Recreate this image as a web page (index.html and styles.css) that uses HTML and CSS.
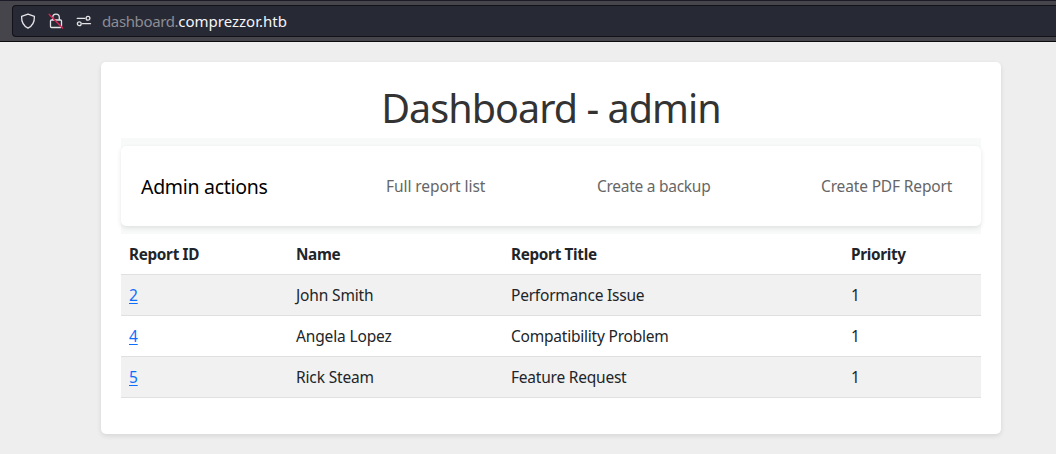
FILE: index.html
```html
<!DOCTYPE html>
<html lang="en">
<head>
<meta charset="utf-8">
<title>Dashboard - admin</title>
<link rel="stylesheet" href="styles.css">
</head>
<body>
<header class="toolbar">
  <div class="urlbar">
    <svg class="icon" viewBox="0 0 16 16"><path d="M8 1.100 14.400 3.400C14.600 9 12.300 12.900 8 15.100 3.700 12.900 1.400 9 1.600 3.400Z"/></svg>
    <svg class="icon" viewBox="0 0 16 16"><path d="M4.700 7V4.400a3.300 3.300 0 0 1 6.600 0V7M3.500 7h9a1 1 0 0 1 1 1v5.500a1 1 0 0 1-1 1h-9a1 1 0 0 1-1-1V8a1 1 0 0 1 1-1Z"/><path class="slash" d="M1.300 1.400 14.500 15"/></svg>
    <svg class="icon" viewBox="0 0 16 16"><path d="M1.200 5.300h7.700M6.400 10.700h8.100"/><circle cx="12" cy="5.300" r="1.900"/><circle cx="3.300" cy="10.700" r="1.900"/></svg>
    <span class="address"><span class="subdomain">dashboard.</span><span class="domain">comprezzor.htb</span></span>
  </div>
</header>
<main class="card">
  <h1 class="title">Dashboard - admin</h1>
  <nav class="navbar">
    <div class="actions">
      <span class="brand">Admin actions</span>
      <a class="action report-list">Full report list</a>
      <a class="action backup">Create a backup</a>
      <a class="action pdf">Create PDF Report</a>
    </div>
  </nav>
  <table class="reports">
    <colgroup><col class="col-id"><col class="col-name"><col class="col-title"><col class="col-priority"></colgroup>
    <thead><tr><th>Report ID</th><th>Name</th><th>Report Title</th><th>Priority</th></tr></thead>
    <tbody>
      <tr><td><a class="link" href="#">2</a></td><td>John Smith</td><td class="report-title">Performance Issue</td><td>1</td></tr>
      <tr><td><a class="link" href="#">4</a></td><td>Angela Lopez</td><td class="report-title">Compatibility Problem</td><td>1</td></tr>
      <tr><td><a class="link" href="#">5</a></td><td>Rick Steam</td><td class="report-title">Feature Request</td><td>1</td></tr>
    </tbody>
  </table>
</main>
</body>
</html>
```
FILE: styles.css
```css
* { box-sizing: border-box; }
body {
  margin: 0;
  height: 454px;
  overflow: hidden;
  background: #eeeeee;
  color: #212529;
  font: 15.5px/24px "Noto Sans", sans-serif;
}
.toolbar {
  height: 42px;
  padding: 4px 0 4px 12px;
  background: #45454b;
  border-top: 1px solid #1c1b27;
  border-bottom: 1px solid #0c0c0d;
}
.urlbar {
  display: flex;
  align-items: center;
  height: 32px;
  padding-left: 7px;
  background: #272934;
  border: 1px solid #121218;
  border-right: 0;
  border-radius: 4px 0 0 4px;
}
.icon {
  width: 16px;
  height: 16px;
  margin-right: 12px;
  fill: none;
  stroke: #e4e4e8;
  stroke-width: 1.3;
  stroke-linejoin: round;
  stroke-linecap: round;
}
.slash { stroke: #d92455; stroke-width: 1.5; }
.address { margin-left: -2px; font-size: 15px; white-space: nowrap; }
.subdomain { color: #8c8d95; letter-spacing: -.37px; }
.domain { color: #f5f5fa; }
.card {
  width: 900px;
  height: 372px;
  margin: 20px 0 0 101px;
  padding: 20px;
  background: #fff;
  border-radius: 5px;
  box-shadow: 0 2px 5px rgba(0, 0, 0, .1);
}
.title {
  height: 48px;
  margin: 0 0 8px;
  padding-top: 2px;
  color: #333;
  font-size: 39.5px;
  font-weight: 400;
  line-height: 48px;
  letter-spacing: -.95px;
  text-align: center;
}
.navbar { height: 96px; padding: 8px 0; background: #f8f9f9; }
.actions {
  display: flex;
  align-items: center;
  height: 80px;
  padding: 0 20px;
  background: #fff;
  border-radius: 5px;
  box-shadow: 0 2px 5px rgba(0, 0, 0, .1);
}
.brand {
  width: 245px;
  padding-top: 2px;
  color: #000;
  font-size: 19.5px;
  line-height: 30px;
  letter-spacing: -.3px;
}
.action { color: #666; white-space: nowrap; letter-spacing: -.15px; }
.report-list { width: 211px; letter-spacing: -.07px; }
.backup { width: 224px; letter-spacing: -.27px; }
.reports {
  width: 860px;
  table-layout: fixed;
  border-collapse: separate;
  border-spacing: 0;
}
.col-id { width: 167px; }
.col-name { width: 215px; }
.col-title { width: 340px; }
.col-priority { width: 138px; }
.reports th, .reports td {
  height: 41px;
  padding: 8px;
  border-bottom: 1px solid #dee0e2;
  text-align: left;
  white-space: nowrap;
  letter-spacing: -.15px;
}
.reports th { font-size: 15.3px; font-weight: 700; letter-spacing: -.32px; }
.reports .report-title { letter-spacing: -.22px; }
.reports tbody tr:nth-child(odd) { background: #f1f1f1; }
.link { color: #0d6efd; text-underline-offset: 2px; }
```
